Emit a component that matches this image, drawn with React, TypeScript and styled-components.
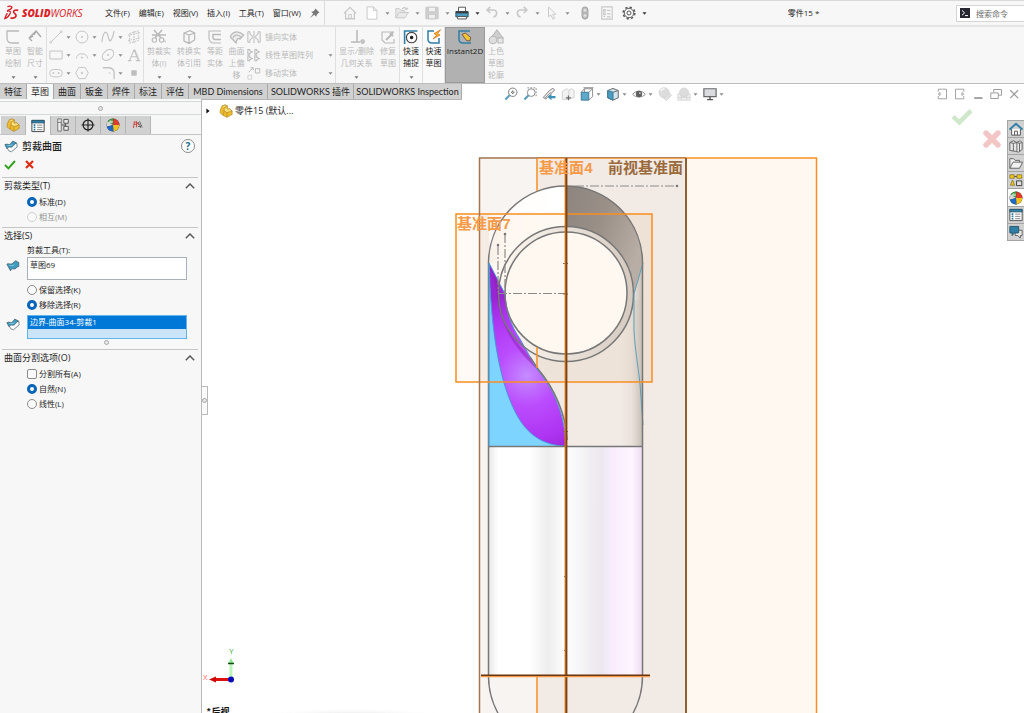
import React, { useState } from 'react';
import styled, { createGlobalStyle, css } from 'styled-components';

const sans = '"Open Sans", "Noto Sans CJK SC", sans-serif';

const GlobalStyle = createGlobalStyle`
  * { box-sizing: border-box; }
  html, body { margin: 0; padding: 0; }
  body { font-family: ${sans}; font-size: 8px; color: #1e1e1e; background: #fff; }
  button, input, textarea { font: inherit; color: inherit; margin: 0; }
  button { border: 0; padding: 0; background: none; }
  ul { list-style: none; margin: 0; padding: 0; }
  svg { display: block; flex: none; }
`;

const Shell = styled.div`
  display: flex;
  flex-direction: column;
  height: 100vh;
  overflow: hidden;
  background: #fff;
`;

/* ---------- title bar ---------- */

const TitleBar = styled.header`
  display: flex;
  align-items: center;
  height: 27px;
  flex: none;
  background: #f7f7f7;
  border-top: 1px solid #d9d9d9;
  border-bottom: 2px solid #e4e4e4;
`;

const Brand = styled.div`
  display: flex;
  align-items: center;
  gap: 3px;
  width: 105px;
  padding-left: 4px;
  color: #da2128;
  font-size: 10px;
  line-height: 12px;
  font-style: italic;
  white-space: nowrap;
  b { font-weight: 800; }
`;

const MenuBar = styled.nav`
  display: flex;
  width: 196px;
  justify-content: space-between;
`;

const MenuButton = styled.button`
  line-height: 14px;
  white-space: nowrap;
  font-size: 8px;
`;

const PinSlot = styled.div`
  display: flex;
  align-items: center;
  justify-content: center;
  width: 24px;
  height: 24px;
  padding-left: 3px;
  border-right: 1px solid #dcdcdc;
`;

const QuickBar = styled.div`
  display: flex;
  align-items: center;
  padding-left: 17px;
  gap: 3px;
`;

const QuickGroup = styled.div`
  display: flex;
  align-items: center;
`;

const QuickCell = styled.div<{ $split?: boolean; $off?: boolean }>`
  display: flex;
  align-items: center;
  width: ${p => (p.$split ? 30 : 22)}px;
  color: ${p => (p.$off ? '#c8c8c8' : '#555')};
`;

const IconButton = styled.button`
  display: flex;
  align-items: center;
  justify-content: center;
  width: 16px;
  height: 16px;
`;

const CaretButton = styled.button<{ $w?: number; $off?: boolean }>`
  display: flex;
  align-items: center;
  justify-content: center;
  width: ${p => p.$w ?? 14}px;
  height: 10px;
  color: ${p => (p.$off ? '#8c8c8c' : '#333')};
`;

const DocTitle = styled.div`
  flex: 1;
  text-align: center;
  line-height: 14px;
`;

const SearchBox = styled.label`
  display: flex;
  align-items: center;
  gap: 6px;
  width: 68px;
  height: 17px;
  padding-left: 3px;
  background: #fff;
  border: 1px solid #d5d5d5;
  border-right: 0;
`;

const SearchInput = styled.input`
  flex: 1;
  min-width: 0;
  border: 0;
  padding: 0;
  outline: 0;
  background: none;
  &::placeholder { color: #6a6a6a; opacity: 1; }
`;

/* ---------- ribbon ---------- */

const Ribbon = styled.div`
  display: flex;
  flex: none;
  height: 57px;
  background: #f7f7f7;
  border-bottom: 1px solid #bdbdbd;
`;

const RibbonGroup = styled.div<{ $w: number }>`
  display: flex;
  width: ${p => p.$w}px;
  flex: none;
  border-right: 1px solid #dfdfdf;
`;

const BigTool = styled.button<{ $w: number; $tone?: 'off' | 'on' | 'pressed' }>`
  display: flex;
  flex-direction: column;
  align-items: center;
  width: ${p => p.$w}px;
  height: 56px;
  padding-top: 2px;
  line-height: 12px;
  text-align: center;
  color: ${p => (p.$tone === 'on' || p.$tone === 'pressed' ? '#1e1e1e' : '#b9b9b9')};
  background: ${p => (p.$tone === 'pressed' ? '#b1b1b1' : p.$tone === 'on' ? '#fafafa' : 'transparent')};
  ${p => p.$tone === 'pressed' && css`border: 1px solid #9a9a9a; padding-top: 1px;`}
`;

const ToolText = styled.span`
  display: block;
  white-space: pre;
`;

const ToolCaret = styled.span`
  display: flex;
  flex: 1;
  align-items: flex-end;
  padding-bottom: 4px;
  color: #777;
`;

const ShapeGrid = styled.div`
  display: grid;
  grid-template-columns: 26px 26px 26px 18px;
  grid-template-rows: repeat(3, 18px);
  padding-top: 1px;
  color: #c4c4c4;
`;

const ShapeCell = styled.div`
  display: flex;
  align-items: center;
  padding-left: 1px;
`;

const PatternList = styled.div`
  display: flex;
  flex-direction: column;
  flex: 1;
  padding-top: 1px;
`;

const PatternRow = styled.div`
  display: flex;
  align-items: center;
  height: 18px;
  color: #b9b9b9;
`;

const PatternButton = styled.button`
  display: flex;
  align-items: center;
  gap: 4px;
  flex: 1;
  white-space: nowrap;
  line-height: 12px;
`;

/* ---------- tab row ---------- */

const TabRow = styled.div`
  display: flex;
  align-items: flex-start;
  flex: none;
  height: 15px;
`;

const CommandTabs = styled.div`
  display: flex;
  border-bottom: 1px solid #b5b5b5;
`;

const CommandTab = styled.button<{ $w: number; $active?: boolean }>`
  width: ${p => p.$w}px;
  height: 15px;
  line-height: 15px;
  font-family: Lato, "Noto Sans CJK SC", sans-serif;
  font-size: 9px;
  white-space: nowrap;
  background: ${p => (p.$active ? '#f7f7f7' : '#d1d1d1')};
  border-right: 1px solid #a9a9a9;
`;

const HeadsUp = styled.div`
  display: flex;
  align-items: center;
  height: 20px;
  margin-left: 41px;
  gap: 3px;
  flex: 1;
`;

const HeadsUpCell = styled.div`
  display: flex;
  align-items: center;
`;

const WindowButtons = styled.div`
  display: flex;
  align-items: center;
  height: 20px;
  gap: 2px;
  padding-right: 2px;
  color: #9b9b9b;
`;

/* ---------- property panel ---------- */

const Body = styled.main`
  display: flex;
  flex: 1;
  min-height: 0;
`;

const Panel = styled.aside`
  width: 202px;
  flex: none;
  background: #f7f7f7;
  border-right: 1px solid #b9b9b9;
  padding-top: 2px;
`;

const PanelGrip = styled.div`
  display: flex;
  align-items: center;
  justify-content: center;
  height: 14px;
  border-top: 1px solid #d3dad9;
  border-bottom: 1px solid #d3dad9;
`;

const Dot = styled.span`
  width: 5px;
  height: 5px;
  border-radius: 50%;
  border: 1px solid #a8a8a8;
  background: #e6e6e6;
`;

const ManagerTabs = styled.div`
  display: flex;
  height: 19px;
  margin-top: 1px;
  border-bottom: 1px solid #c4c4c4;
  padding-left: 1px;
`;

const ManagerTab = styled.button<{ $active?: boolean }>`
  display: flex;
  align-items: center;
  justify-content: center;
  width: 25px;
  height: ${p => (p.$active ? 19 : 18)}px;
  background: ${p => (p.$active ? '#f7f7f7' : '#d1d1d1')};
  border-right: 1px solid #b5b5b5;
`;

const FeatureTitle = styled.div`
  display: flex;
  align-items: center;
  height: 21px;
  padding: 0 6px 0 4px;
  gap: 4px;
`;

const FeatureName = styled.h1`
  flex: 1;
  margin: 0;
  font-size: 10px;
  line-height: 14px;
  font-weight: 500;
`;

const HelpButton = styled.button`
  width: 14px;
  height: 14px;
  border: 1px solid #8b8b8b;
  border-radius: 50%;
  background: #fff;
  color: #1c6a8e;
  font-size: 10px;
  line-height: 12px;
  font-weight: 700;
`;

const Decision = styled.div`
  display: flex;
  align-items: center;
  height: 21px;
  padding: 0 2px 4px;
  gap: 3px;
`;

const Section = styled.section<{ $pad: number }>`
  margin: 0 3px 0 2px;
  padding: 0 0 ${p => p.$pad}px 2px;
  border-top: 1px solid #c6c6c6;
`;

const SectionHead = styled.button`
  display: flex;
  align-items: center;
  justify-content: space-between;
  width: 100%;
  height: 16px;
  padding-right: 3px;
  font-size: 9px;
  line-height: 16px;
`;

const Choice = styled.label<{ $off?: boolean }>`
  display: flex;
  align-items: center;
  gap: 2px;
  height: 15px;
  margin-left: 23px;
  line-height: 15px;
  color: ${p => (p.$off ? '#8f8f8f' : '#1e1e1e')};
`;

const RadioInput = styled.input.attrs({ type: 'radio' })`
  appearance: none;
  width: 10px;
  height: 10px;
  border: 1px solid #8a8a8a;
  border-radius: 50%;
  background: #fafafa;
  &:checked { border: 3px solid #0a64b8; background: #fff; }
  &:disabled { border-color: #cfcfcf; }
`;

const CheckInput = styled.input.attrs({ type: 'checkbox' })`
  appearance: none;
  width: 10px;
  height: 10px;
  border: 1px solid #8a8a8a;
  border-radius: 2px;
  background: #fafafa;
  &:checked { background: #0a64b8; }
`;

const FieldLabel = styled.label`
  display: block;
  height: 13px;
  margin-left: 23px;
  line-height: 12px;
`;

const FieldRow = styled.div<{ $before?: number; $after?: number }>`
  display: flex;
  gap: 7px;
  padding-left: 2px;
  margin-top: ${p => p.$before ?? 0}px;
  margin-bottom: ${p => p.$after ?? 0}px;
  svg { margin-top: 2px; }
`;

const PickedText = styled.textarea`
  width: 160px;
  height: 23px;
  padding: 0 2px;
  line-height: 14px;
  border: 1px solid #aab0ba;
  border-radius: 0;
  background: #fff;
  resize: none;
  outline: 0;
  overflow: hidden;
`;

const PickedList = styled.ul`
  width: 160px;
  height: 24px;
  border: 1px solid #62b5ea;
  outline: 0;
  background: #cce4f7;
`;

const PickedItem = styled.li`
  height: 13px;
  padding-left: 2px;
  line-height: 12px;
  color: #fff;
  background: #0078d7;
`;

const GripLine = styled.div`
  display: flex;
  justify-content: center;
  align-items: center;
  height: 6px;
  padding-left: 11px;
`;

/* ---------- graphics area ---------- */

const Viewport = styled.section`
  position: relative;
  flex: 1;
  min-width: 0;
  overflow: hidden;
`;

const Scene = styled.svg`
  position: absolute;
  inset: 0;
  width: 100%;
  height: 100%;
`;

const TreeNode = styled.div`
  position: relative;
  display: inline-flex;
  align-items: center;
  height: 16px;
  margin-top: 4px;
  padding-left: 4px;
  gap: 9px;
  font-size: 9px;
  line-height: 16px;
`;

const TreeLabel = styled.span`
  display: flex;
  align-items: center;
  gap: 2px;
`;

const PanelHandle = styled.button`
  position: absolute;
  left: 0;
  top: 287px;
  display: flex;
  align-items: center;
  justify-content: center;
  width: 6px;
  height: 29px;
  background: #fafafa;
  border: 1px solid #b9b9b9;
  border-left: 0;
`;

const Confirm = styled.div`
  position: absolute;
  top: 8px;
  right: 22px;
  display: flex;
  gap: 9px;
  align-items: flex-start;
  button + button { margin-top: 22px; }
`;

const TaskPane = styled.div`
  position: absolute;
  top: 21px;
  right: 0;
  width: 17px;
  border-left: 1px solid #a5a5a5;
  border-top: 1px solid #a5a5a5;
`;

const TaskButton = styled.button<{ $active?: boolean }>`
  display: flex;
  align-items: center;
  padding-left: 1px;
  width: 16px;
  height: ${p => (p.$active ? 18 : 17)}px;
  background: ${p => (p.$active ? '#fff' : '#d1d1d1')};
  border-bottom: 1px solid #a5a5a5;
  overflow: hidden;
`;

/* ---------- glyphs ---------- */

const Caret = () => (
  <svg width="5" height="3" viewBox="0 0 5 3"><path d="M0.5 0.3h4L2.5 2.8z" fill="currentColor" /></svg>
);

type GlyphProps = { s?: number; v?: number; children: React.ReactNode };
const Glyph = ({ s = 14, v = 16, children }: GlyphProps) => (
  <svg width={s} height={s} viewBox={`0 0 ${v} ${v}`} fill="none" stroke="currentColor" strokeWidth="1.1">{children}</svg>
);

const Logo = () => (
  <svg width="15" height="16" viewBox="0 0 15 16" fill="none" stroke="#da2128" strokeWidth="1.3">
    <path d="M3.4 1.6C6 .8 8.400 1.200 7.800 2.800C7.400 4 5.200 5 3.200 5.600" />
    <path d="M3 6.400C5.600 5.200 7 6.400 6 8.800C5 11.200 2.800 13 .8 13.600C1.200 11.600 2 9.800 3.400 8.200" />
    <path d="M14.200 5.400C12 4.600 9.400 5.400 9.600 7C9.800 8.600 12.600 9.200 12 11C11.400 12.800 8.600 13.400 6.400 13" strokeWidth="1.700" />
  </svg>
);

const Ball = ({ s = 13 }: { s?: number }) => (
  <svg width={s} height={s} viewBox="0 0 16 16">
    <circle cx="8" cy="8" r="7.4" fill="#2a2a2a" />
    <path d="M8 8L2 3.6A7.2 7.2 0 0 1 8.6 0.8z" fill="#3a9e3e" />
    <path d="M8 8L8.6 0.8A7.2 7.2 0 0 1 15.2 8z" fill="#e23b2c" />
    <path d="M8 8L2 3.6A7.2 7.2 0 0 0 1 10z" fill="#d8d8d8" />
    <path d="M8 8L15.2 8A7.2 7.2 0 0 1 8.4 15.2z" fill="#f2c31c" />
    <path d="M8 8L1 10A7.2 7.2 0 0 0 8.4 15.2z" fill="#2168c4" />
    <ellipse cx="5.6" cy="4.4" rx="2.4" ry="1.6" fill="#fff" opacity=".6" />
  </svg>
);

const PartIcon = ({ s = 14 }: { s?: number }) => (
  <svg width={s} height={s} viewBox="0 0 16 16" stroke="#a9841f" strokeWidth=".7" strokeLinejoin="round">
    <path d="M1.400 7L3.400 2.400L7 1L9.600 2.200V6L12 5.400L15 8V12L9 15.200L4.800 13L1.400 10.400z" fill="#eebb2e" />
    <path d="M3.400 2.400L7 1L9.600 2.200L6.200 4L5.800 8L9 9.800L15 8L12 5.400L9.600 6" fill="#fbdf7c" />
    <path d="M9 9.800V15.200M5.800 8L4.800 13" fill="none" />
  </svg>
);

const SurfaceIcon = ({ trimmed }: { trimmed?: boolean }) => (
  <svg width="14" height="14" viewBox="0 0 16 16" stroke="#3f5a66" strokeWidth=".8" strokeLinejoin="round">
    {trimmed && <path d="M3 9L8 7L14.6 4.6L15 9L8.6 14.6L5.6 13.6z" fill="#fff" />}
    <path
      d={trimmed ? 'M1 6.6C3.4 4.4 5.6 8 7.6 5.4L10 2.4L14 4.4C11.6 6 10.4 9.6 8 9.4C5.8 9.4 5.4 8.6 3.4 11z' : 'M1 6C3.4 4 5.6 7.4 8 4.6L11 2L14.6 4V8.6C12 8.6 11 12.4 8.6 11.4C6.8 10.8 6.4 11 5.2 13.6z'}
      fill="#3f9cc0"
    />
    <path d="M4 7.4C6 7 7.6 8.6 9.6 6.4" stroke="#a7d8ea" fill="none" />
  </svg>
);

const Chevron = () => (
  <svg width="10" height="6" viewBox="0 0 10 6" fill="none" stroke="#5a5a5a" strokeWidth="1.5"><path d="M0.8 5.2L5 1L9.2 5.2" /></svg>
);

const shapes: { name: string; art: React.ReactNode; caret?: boolean }[] = [
  { name: '直线', caret: true, art: <><path d="M2 14L14 2" /><path d="M1 13h2v2h-2zM13 1h2v2h-2z" strokeWidth=".7" /></> },
  { name: '圆', caret: true, art: <><circle cx="8" cy="8" r="6.8" /><circle cx="8" cy="8" r=".8" /></> },
  { name: '样条曲线', caret: true, art: <path d="M1 14C2 4 5 0 7 4C9 8 9 14 11 12C13 10 14 6 15 1" strokeWidth="1.4" /> },
  { name: '基准面', art: <path d="M3 4L13 1V12L3 15zM1 6L15 3M1 12L15 9M8 1V16" strokeDasharray="2 1" /> },
  { name: '矩形', caret: true, art: <path d="M1 3.5H15V12.5H1z" /> },
  { name: '圆弧', caret: true, art: <><path d="M1.5 12A6.6 6.6 0 0 1 14.5 12" /><circle cx="8" cy="11" r=".8" /></> },
  { name: '椭圆', caret: true, art: <><ellipse cx="8" cy="8" rx="7.4" ry="5.2" transform="rotate(-40 8 8)" /><circle cx="8" cy="8" r=".8" /></> },
  { name: '文本', art: <path d="M1 14.4H5M10 14.4H15M3 14L8 2L13 14M5 10H11M9 2L13.6 14" strokeWidth="1.2" /> },
  { name: '槽口', caret: true, art: <><rect x=".8" y="4" width="14.4" height="8.4" rx="4.2" /><path d="M4 8.2H6M10 8.2H12" strokeWidth="2" /></> },
  { name: '多边形', art: <><path d="M4.4 1.6H11.6L15.2 8L11.6 14.4H4.4L.8 8z" /><circle cx="8" cy="8" r="1" /></> },
  { name: '圆角', caret: true, art: <><path d="M2 2H8C13 2 15 5 15 8V15" strokeWidth="1.5" /><path d="M9 7L11 9" /></> },
  { name: '点', art: <path d="M5.4 5.4H10.6V10.6H5.4z" fill="#bdbdbd" /> },
];

const patterns: { name: string; caret?: boolean; art: React.ReactNode }[] = [
  { name: '镜向实体', art: <path d="M1 2V14H3.4V11L6 9.6V6.4L3.4 5V2zM15 2V14H12.6V11L10 9.6V6.4L12.6 5V2zM8 1V15" /> },
  { name: '线性草图阵列', caret: true, art: <path d="M1 1.6H3V3L6 4.4L3 6V7H1zM9 1.6H11V3L14 4.4L11 6V7H9zM1 9H3V10.4L6 12L3 13.4V14.6H1zM9 9H11V10.4L14 12L11 13.4V14.6H9z" strokeWidth="1.2" /> },
  { name: '移动实体', caret: true, art: <><path d="M9.6 3H14.6V8H9.6zM2 7L7 2M4 2H7V5" /><path d="M1 10.6H5.4V15H1z" strokeWidth=".6" /></> },
];

const Headlamp = {
  fit: <><circle cx="10" cy="6" r="4.800" stroke="#777" fill="#fff" /><path d="M6.400 9.400L1.600 14.200" stroke="#5a9cbb" strokeWidth="2.400" /><path d="M8 6H12M10 4V8" stroke="#555" strokeWidth="1.300" strokeDasharray="1.400 1.200" /></>,
  area: <><circle cx="9.4" cy="6.4" r="4.400" stroke="#888" fill="#fff" /><path d="M6.4 9.4L1.6 14.2" stroke="#5a9cbb" strokeWidth="2.4" /><path d="M5 1H15V11" stroke="#888" strokeDasharray="2 1.5" /></>,
  previous: <><path d="M1.400 12L8.600 4L12.400 1.400L14.400 3.400L10 8L4.400 13.600z" stroke="#808080" fill="#ececec" /><path d="M3 13L10 6" stroke="#9a9a9a" /><path d="M15.400 12.800H10.800V15L6.400 11.400L10.800 8V10.200H15.400z" fill="#3c8fb5" stroke="none" /></>,
  section: <><path d="M1.400 5L7 2L9 4V14H1.400zM9 4L12 2L15 4V12L9 14" stroke="#d0d0d0" fill="#f2f2f2" /><path d="M5.600 12.400H11.400M8.500 9.600V15.200" stroke="#6b6b6b" strokeWidth="1.300" /></>,
  orient: <><path d="M1.4 6H10V15H1.4z" fill="#5ea9ca" stroke="#3b7894" /><path d="M1.4 6L5 2H14.4V11L10 15M10 6L14.4 2M5 2V6M4 .8H15.4" stroke="#777" strokeWidth=".9" /></>,
  display: <><path d="M2 4L8 1.6L14 4V12.4L8 15L2 12.4z" fill="#cfe4ed" stroke="#666" /><path d="M2 4L8 6V15L2 12.4z" fill="#4a9cc0" stroke="#3b7894" /><path d="M8 6L14 4" stroke="#666" /></>,
  hide: <><path d="M.8 8.4C4 3.6 12 3.6 15.2 8.4C12 12.4 4 12.4 .8 8.4z" stroke="#8a8a8a" fill="#fff" /><circle cx="8" cy="8" r="3.6" fill="#5e5e5e" stroke="none" /><circle cx="9" cy="7" r="1" fill="#ccc" stroke="none" /></>,
  look: <><path d="M5 11L11 5L15.4 9.6L9.4 15.6z" fill="#e6e6e6" stroke="#d0d0d0" /><circle cx="7" cy="6.6" r="5.8" fill="#dcdcdc" stroke="#d6d6d6" /><path d="M3 4.6C4 2.6 6 2 7.4 2" stroke="#f8f8f8" strokeWidth="1.6" /></>,
  scene: <><path d="M1 8H15V15H1z" fill="#f0f0f0" stroke="#d6d6d6" /><circle cx="8" cy="6.4" r="5.2" fill="#dcdcdc" stroke="#d6d6d6" /><path d="M1 12H15M5 9V15M11 9V15" stroke="#d6d6d6" /></>,
  screen: <><path d="M1 2H15V11H1z" fill="#d9dcdf" stroke="#6a6a6a" strokeWidth="1.4" /><path d="M8 11V14M4.6 14.4H11.4" stroke="#555" strokeWidth="1.6" /></>,
};

const headsUp: { key: keyof typeof Headlamp; label: string; caret?: boolean }[] = [
  { key: 'fit', label: '整屏显示全图' },
  { key: 'area', label: '局部放大' },
  { key: 'previous', label: '上一视图' },
  { key: 'section', label: '剖面视图' },
  { key: 'orient', label: '视图定向', caret: true },
  { key: 'display', label: '显示样式', caret: true },
  { key: 'hide', label: '隐藏/显示', caret: true },
  { key: 'look', label: '编辑外观' },
  { key: 'scene', label: '应用布景', caret: true },
  { key: 'screen', label: '视图设定', caret: true },
];

const quick: { label: string; off?: boolean; split?: boolean; art: React.ReactNode }[] = [
  { label: '主页', off: true, art: <><path d="M1 8.4L8 1.6L15 8.4M3 7.4V14.6H13V7.4" strokeWidth="1.5" /><path d="M6.6 14V9.6H9.6V14" /></> },
  { label: '新建', off: true, split: true, art: <path d="M2.4 1H9.6L13.6 5V15H2.4zM9.6 1V5H13.6" fill="#fff" /> },
  { label: '打开', off: true, split: true, art: <><path d="M1 13.6V3H5L6.6 5H11V7.4M1 13.6L4.6 7.4H15.4L11.4 13.6z" fill="#e9e9e9" /><path d="M8 3.4C10 1 12.6 1.4 13.4 4M13.4 4L11.6 3.4M13.4 4L14.8 2" strokeWidth="1.4" /></> },
  { label: '保存', off: true, split: true, art: <><path d="M1 1.4H15V14.6H1z" fill="#cfcfcf" /><path d="M4 1.4H12V6.6H4z" fill="#f2f2f2" /><path d="M4 9.4H12V14.6H4z" fill="#ededed" /></> },
];

const Edge = { stroke: '#777', strokeWidth: 1.5, fill: 'none' };

/* The end-mill style part, with its reference planes and trimmed surface. */
const ModelScene = () => (
  <Scene viewBox="202 99 822 614" preserveAspectRatio="xMidYMin slice" fontFamily='"Liberation Mono", "Noto Sans CJK SC", monospace'>
    <defs>
      <linearGradient id="barrel" x1="0" x2="1" y1="0" y2="0">
        <stop offset="0" stopColor="#e9e9e9" /><stop offset=".06" stopColor="#fff" /><stop offset=".26" stopColor="#fff" />
        <stop offset=".38" stopColor="#eeeeee" /><stop offset=".42" stopColor="#f2f2f2" /><stop offset=".48" stopColor="#fdfdfd" />
        <stop offset=".54" stopColor="#fafafa" /><stop offset=".73" stopColor="#ebe7ee" /><stop offset=".8" stopColor="#f9edfd" />
        <stop offset=".93" stopColor="#fdf5ff" /><stop offset="1" stopColor="#eed9f0" />
      </linearGradient>
      <linearGradient id="hood" x1="0" x2="1" y1="0" y2=".5">
        <stop offset="0" stopColor="#8c847e" /><stop offset=".5" stopColor="#9a9088" /><stop offset="1" stopColor="#b8aea5" />
      </linearGradient>
      <linearGradient id="flank" x1="0" x2="1" y1="0" y2="0">
        <stop offset="0" stopColor="#cfc6bd" stopOpacity="0" /><stop offset=".5" stopColor="#cfc6bd" stopOpacity=".25" /><stop offset="1" stopColor="#c3bab2" />
      </linearGradient>
      <linearGradient id="band" x1="0" x2="1" y1="0" y2="0">
        <stop offset="0" stopColor="#fff8f1" /><stop offset=".45" stopColor="#ece5dd" /><stop offset="1" stopColor="#d6cac0" />
      </linearGradient>
      <linearGradient id="sky" x1="0" x2="0" y1="0" y2="1">
        <stop offset="0" stopColor="#74bfe6" /><stop offset=".5" stopColor="#7cd4ff" /><stop offset="1" stopColor="#7cd4ff" />
      </linearGradient>
      <linearGradient id="dome" x1="0" x2="1" y1="0" y2="0">
        <stop offset="0" stopColor="#e8e4df" /><stop offset=".25" stopColor="#fffdfb" /><stop offset="1" stopColor="#fff" />
      </linearGradient>
      <radialGradient id="violet" gradientUnits="userSpaceOnUse" cx="527" cy="376" r="84">
        <stop offset="0" stopColor="#c48cff" /><stop offset=".35" stopColor="#bb4dfd" /><stop offset=".75" stopColor="#ae34f2" /><stop offset="1" stopColor="#9a25d4" />
      </radialGradient>
      <radialGradient id="floor" gradientUnits="userSpaceOnUse" cx="352" cy="0" r="100" gradientTransform="matrix(1 0 0 .08 0 716)">
        <stop offset="0" stopColor="#d8d8d8" /><stop offset="1" stopColor="#fff" stopOpacity="0" />
      </radialGradient>
    </defs>

    <rect x="250" y="700" width="204" height="20" fill="url(#floor)" />

    {/* reference planes */}
    <rect x="686" y="158" width="130" height="700" fill="#fff8f1" />
    <rect x="479" y="158" width="58" height="700" fill="#f8f4f1" />
    <rect x="537" y="158" width="149" height="700" fill="#f2eae5" />
    <rect x="456" y="214" width="196" height="168" fill="#fff8f1" fillOpacity=".75" />
    <rect x="479" y="214" width="10" height="168" fill="#f5ece4" />
    <rect x="643" y="214" width="9" height="168" fill="#eee2d7" />
    <path d="M600 214H652V268H643C643 246 626 222 600 214z" fill="#eee2d7" />

    {/* body */}
    <path d="M489 263A77 77 0 0 1 566 186V300H489z" fill="url(#dome)" />
    <path d="M507 214H566V300H489V263C489 244 495 228 507 214z" fill="#fff6ec" fillOpacity=".65" />
    <path d="M489 263H566V446H489z" fill="#f3ede6" />
    <path d="M489 263H540V294H489z" fill="#fff8f1" />
    <path d="M566 300H643V446H566z" fill="#f2eae5" />
    <path d="M525 300H643V382H540z" fill="#ede3d9" />
    <path d="M540 382H566V446z" fill="#f2eae5" />
    <path d="M566 186A77 77 0 0 1 643 263L634 294H566z" fill="url(#hood)" />
    <path d="M620 300L634 294L643 263V446H620z" fill="url(#flank)" />

    {/* bore ring */}
    <circle cx="566" cy="294" r="67.5" fill="url(#band)" />
    <circle cx="566" cy="293" r="61" fill="#fff8f1" />

    {/* trimmed surface */}
    <path d="M489 263V446H566C520 446 492 380 489 263z" fill="url(#sky)" />
    <path d="M489 263L505 294C506 312 511 326 520 339L537 369C554 389 565 415 566 446C548 446 530 438 518 417C499 384 491 330 489 263z" fill="url(#violet)" />
    <path d="M489 263L498 281C498 318 512 340 526 352L537 369C518 352 500 330 496 290z" fill="#8a20b4" fillOpacity=".5" />
    <path d="M489 263L505 294C506 312 511 326 520 339L537 369C554 389 565 415 566 446C548 446 530 438 518 417C499 384 491 330 489 263" fill="none" stroke="#4a90e0" strokeWidth="1" />
    <path d="M530 357L538 369C555 389 566 415 567 440" {...Edge} />
    <path d="M498.500 294A67.500 67.500 0 1 1 633.500 294A67.500 67.500 0 0 1 498.500 294" {...Edge} />
    <path d="M505 293A61 61 0 1 1 627 293A61 61 0 0 1 505 293" {...Edge} />
    <path d="M643 263L634 294V330C635 350 638 365 640 384L643 425" fill="none" stroke="#5b9fb8" strokeWidth="1" />

    {/* barrel */}
    <rect x="489" y="447" width="154" height="228" fill="url(#barrel)" />
    <path d="M488.500 676V263A77 77 0 0 1 642.500 263V676A77 77 0 0 1 565.500 753A77 77 0 0 1 488.500 676" {...Edge} />
    <path d="M488 446.500H643" {...Edge} />
    <path d="M489 263V446" stroke="#4ba0e0" strokeWidth="1" />

    {/* sketch centre lines */}
    <path d="M575 186H676M498 293.500H566M505 234V292M498 246V292" fill="none" stroke="#8a8a8a" strokeWidth="1.2" strokeDasharray="9 2 2 2" />
    <g fill="#777"><circle cx="677" cy="186" r="1.300" /><circle cx="505" cy="234" r="1.300" /><circle cx="498" cy="245" r="1.300" /></g>
    <path d="M563 263.500H568M563 431.500H568M564 576.500H567M564 650.500H567M563 294H568" stroke="#7a6a5a" strokeWidth="1" />

    {/* plane outlines */}
    <g fill="none">
      <path d="M537 158H816.500V720M537 158V191M537 676V720M537 347V368" stroke="#f98e24" strokeWidth="1.500" />
      <path d="M456 214H652V382H456z" stroke="#fa8d20" strokeWidth="1.500" />
      <path d="M479.500 720V158H537" stroke="#a0764f" strokeWidth="1.500" />
      <path d="M537 157.500H686" stroke="#a0764f" strokeWidth=".8" />
      <path d="M686 158V720" stroke="#8f5f30" strokeWidth="2" />
      <path d="M565.500 158V720" stroke="#e07c20" strokeWidth="1.800" />
      <path d="M566.500 158V720" stroke="#7c4311" strokeWidth="1.800" />
      <path d="M481 676.500H650" stroke="#f29a48" strokeWidth="1.400" />
      <path d="M481 675.300H650" stroke="#6d3410" strokeWidth="1.500" />
    </g>
    <g fontSize="15" fontWeight="700">
      <text x="539" y="173" fill="#f79a48">基准面4</text>
      <text x="608" y="173" fill="#9a6a3c">前视基准面</text>
      <text x="457" y="229" fill="#f79a48">基准面7</text>
    </g>

    {/* view triad */}
    <path d="M231 679V664" stroke="#b8f5b8" strokeWidth="3" />
    <path d="M228 664H234L231 658z" fill="#8fe98f" /><path d="M228 663.500H234" stroke="#134d13" strokeWidth="1.500" />
    <path d="M229 679.500H214" stroke="#e01010" strokeWidth="3" /><path d="M209 679.500L216 676.500V682.500z" fill="#d00808" />
    <circle cx="231" cy="679.500" r="3" fill="#0a0ab8" />
    <g fontFamily='"Liberation Sans", sans-serif' fontSize="7">
      <text x="229" y="654" fill="#3cae3c">Y</text>
      <text x="203" y="680" fill="#ff6a6a">X</text>
    </g>
    <text x="206" y="715" fontSize="9" fontWeight="700" fill="#111">*后视</text>
  </Scene>
);

export default function App() {
  const [kind, setKind] = useState('standard');
  const [keep, setKeep] = useState('remove');
  const [split, setSplit] = useState('natural');
  const [all, setAll] = useState(false);

  return (
    <Shell>
      <GlobalStyle />
      <TitleBar>
        <Brand><Logo /><span><b>SOLID</b>WORKS</span></Brand>
        <MenuBar>
          {['文件(F)', '编辑(E)', '视图(V)', '插入(I)', '工具(T)', '窗口(W)'].map(m => <MenuButton key={m}>{m}</MenuButton>)}
        </MenuBar>
        <PinSlot>
          <svg width="11" height="11" viewBox="0 0 12 12" fill="#777"><path d="M7 .6L11.4 5L10 5.600L8.400 7.400L8 9.600L5.600 7.400L1 11.200L4.600 6.400L2.400 4.200L4.600 3.800L6.400 2z" /></svg>
        </PinSlot>
        <QuickBar>
          <QuickGroup>
            {quick.map(q => (
              <QuickCell key={q.label} $split={q.split} $off={q.off}>
                <IconButton aria-label={q.label}><Glyph>{q.art}</Glyph></IconButton>
                {q.split && <CaretButton $off aria-label={`${q.label}选项`}><Caret /></CaretButton>}
              </QuickCell>
            ))}
            <QuickCell $split>
              <IconButton aria-label="打印">
                <Glyph><path d="M4 6V1.400H12V6" fill="#fff" stroke="#555" /><path d="M1 6.400H15V12.400H1z" fill="#4b9cc0" stroke="#28566b" /><path d="M1 6H15V8.400H1z" fill="#3b3b3b" stroke="none" /><path d="M3 12H13V14.800H3z" fill="#fff" stroke="#555" /></Glyph>
              </IconButton>
              <CaretButton aria-label="打印选项"><Caret /></CaretButton>
            </QuickCell>
            <QuickCell $split $off>
              <IconButton aria-label="撤消"><Glyph><path d="M3 4.600H10C15 5 14 11.600 9.600 12.600M6 1L2.400 4.600L6 8" strokeWidth="1.800" /></Glyph></IconButton>
              <CaretButton $off aria-label="撤消选项"><Caret /></CaretButton>
            </QuickCell>
            <QuickCell $split $off>
              <IconButton aria-label="重做"><Glyph><path d="M13 4.600H6C1 5 2 11.600 6.400 12.600M10 1L13.600 4.600L10 8" strokeWidth="1.800" /></Glyph></IconButton>
              <CaretButton $off aria-label="重做选项"><Caret /></CaretButton>
            </QuickCell>
            <QuickCell $split $off>
              <IconButton aria-label="选择"><Glyph><path d="M4 1V12.400L6.600 10L9 15L11 14L8.800 9.400H12.400z" /></Glyph></IconButton>
              <CaretButton $off aria-label="选择选项"><Caret /></CaretButton>
            </QuickCell>
          </QuickGroup>
          <QuickGroup>
            <QuickCell $off><IconButton aria-label="重建模型"><Glyph><rect x="4.600" y="1" width="6.800" height="14" rx="3.400" fill="#b5b5b5" stroke="#a5a5a5" /><circle cx="8" cy="4.800" r="1.800" fill="#e6e6e6" /><circle cx="8" cy="11" r="1.800" fill="#e6e6e6" /></Glyph></IconButton></QuickCell>
            <QuickCell $off><IconButton aria-label="文件属性"><Glyph><path d="M2 1H14V15H2zM4 4H6V6H4zM4 8H6V10H4zM4 12H6M8 5H12M8 9H12M8 12.400H12" strokeWidth="1.300" /></Glyph></IconButton></QuickCell>
            <QuickCell $split>
              <IconButton aria-label="选项">
                <Glyph><circle cx="8" cy="8" r="2.300" /><circle cx="8" cy="8" r="5.400" /><circle cx="8" cy="8" r="6.700" strokeWidth="1.700" strokeDasharray="2.600 2.660" /></Glyph>
              </IconButton>
              <CaretButton aria-label="选项菜单"><Caret /></CaretButton>
            </QuickCell>
          </QuickGroup>
        </QuickBar>
        <DocTitle>零件15 *</DocTitle>
        <SearchBox>
          <svg width="10" height="10" viewBox="0 0 10 10"><rect width="10" height="10" fill="#262630" /><path d="M2 2.400L4.600 4.800L2 7.200M5 7.600H8" stroke="#fff" fill="none" /></svg>
          <SearchInput placeholder="搜索命令" aria-label="搜索命令" />
        </SearchBox>
      </TitleBar>

      <Ribbon>
        <RibbonGroup $w={47}>
          <BigTool $w={26}>
            <Glyph s={16}><path d="M14 2H2V9C2 12 4 14 7 14H14" strokeWidth="1.300" /></Glyph>
            <ToolText>{'草图\n绘制'}</ToolText><ToolCaret><Caret /></ToolCaret>
          </BigTool>
          <BigTool $w={18}>
            <Glyph s={16}><path d="M2 9L9 2L14 8M2 9L5 12M9 2L7 6M2 9L6 7" strokeWidth="1.400" stroke="#a9a9a9" /></Glyph>
            <ToolText>{'智能\n尺寸'}</ToolText><ToolCaret><Caret /></ToolCaret>
          </BigTool>
        </RibbonGroup>
        <RibbonGroup $w={97}>
          <ShapeGrid>
            {shapes.map(s => (
              <ShapeCell key={s.name}>
                <IconButton aria-label={s.name}><Glyph>{s.art}</Glyph></IconButton>
                {s.caret && <CaretButton $w={8} $off aria-label={`${s.name}选项`}><Caret /></CaretButton>}
              </ShapeCell>
            ))}
          </ShapeGrid>
        </RibbonGroup>
        <RibbonGroup $w={192}>
          <BigTool $w={30}>
            <Glyph s={16}><path d="M3 1L10 9M11 1L4 9M1 6H15" strokeWidth="1.500" /><circle cx="3.400" cy="11" r="2.200" /><circle cx="10.600" cy="11" r="2.200" /><path d="M12 9L15 14" strokeDasharray="2 1" /></Glyph>
            <ToolText>{'剪裁实\n体(I)'}</ToolText><ToolCaret><Caret /></ToolCaret>
          </BigTool>
          <BigTool $w={30}>
            <Glyph s={16}><path d="M3 4L9 1.600L13.600 4V11L8 14.400L3 12zM3 4L8 6L13.600 4M8 6V14.400" strokeWidth="1.300" /></Glyph>
            <ToolText>{'转换实\n体引用'}</ToolText><ToolCaret><Caret /></ToolCaret>
          </BigTool>
          <BigTool $w={22}>
            <Glyph s={16}><path d="M14 2H2V9C2 12 4 14 7 14H14" /><path d="M14 5.600H6V8C6 9.600 7 10.600 8.600 10.600H14" strokeWidth="1.500" /></Glyph>
            <ToolText>{'等距\n实体'}</ToolText>
          </BigTool>
          <BigTool $w={21}>
            <Glyph s={16}><path d="M1.400 8C3 3 8 .6 14.600 6L11 10C9.600 8.600 8 9.400 7 14z" strokeWidth="1.300" fill="#ececec" /><path d="M4 9C5 6 8 4.600 12 8" /></Glyph>
            <ToolText>{'曲面\n上偏\n移'}</ToolText>
          </BigTool>
          <PatternList>
            {patterns.map(p => (
              <PatternRow key={p.name}>
                <PatternButton><Glyph s={14}>{p.art}</Glyph>{p.name}</PatternButton>
                {p.caret && <CaretButton $w={9} $off aria-label={`${p.name}选项`}><Caret /></CaretButton>}
              </PatternRow>
            ))}
          </PatternList>
        </RibbonGroup>
        <RibbonGroup $w={64}>
          <BigTool $w={41}>
            <Glyph s={16}><path d="M8 1V13M2 13H11" strokeWidth="1.500" /><circle cx="13.600" cy="12.600" r="1.800" fill="#cacaca" /></Glyph>
            <ToolText>{'显示/删除\n几何关系'}</ToolText><ToolCaret><Caret /></ToolCaret>
          </BigTool>
          <BigTool $w={22}>
            <Glyph s={16}><path d="M14 3H2V11L5 14H14V10" /><path d="M6 11L11 6M10 4L13 7M13 3L10.600 6.400" strokeWidth="2" /></Glyph>
            <ToolText>{'修复\n草图'}</ToolText>
          </BigTool>
        </RibbonGroup>
        <RibbonGroup $w={23}>
          <BigTool $w={22} $tone="on">
            <Glyph s={16}><path d="M1.600 15V2H14.400" stroke="#2f7fa6" strokeWidth="1.600" /><circle cx="8.600" cy="8.600" r="5.200" stroke="#444" /><circle cx="8.600" cy="8.600" r="1.200" fill="#222" /></Glyph>
            <ToolText>{'快速\n捕捉'}</ToolText><ToolCaret><Caret /></ToolCaret>
          </BigTool>
        </RibbonGroup>
        <RibbonGroup $w={22}>
          <BigTool $w={21} $tone="on">
            <Glyph s={16}><path d="M8 2H2V10C2 12.400 3.600 14 6 14H13V9" stroke="#2f7fa6" strokeWidth="1.500" /><path d="M14.600 .8L8 4.600L10.600 6L7 10L14 6L11.600 4.600z" fill="#f6b71c" stroke="#d2691e" strokeWidth=".7" /></Glyph>
            <ToolText>{'快速\n草图'}</ToolText>
          </BigTool>
        </RibbonGroup>
        <BigTool $w={40} $tone="pressed">
          <Glyph s={16}><path d="M13 2H2V10C2 12.400 3.600 14 6 14H14" stroke="#2f7fa6" strokeWidth="1.500" /><path d="M5 5.400L8.400 4L13.600 8.400L13 12L9.600 11.600z" fill="#f4c430" stroke="#544" strokeWidth=".8" /></Glyph>
          <ToolText>Instant2D</ToolText>
        </BigTool>
        <BigTool $w={22}>
          <Glyph s={16}><path d="M9 1L15 9H3z" fill="#cfcfcf" /><circle cx="5" cy="11" r="3.800" fill="#dedede" /><path d="M10 9V14H15V9z" fill="#e8e8e8" /></Glyph>
          <ToolText>{'上色\n草图\n轮廓'}</ToolText>
        </BigTool>
      </Ribbon>

      <TabRow>
        <CommandTabs role="tablist">
          {['特征', '草图', '曲面', '钣金', '焊件', '标注', '评估'].map(t => (
            <CommandTab key={t} role="tab" $w={27} $active={t === '草图'}>{t}</CommandTab>
          ))}
          <CommandTab role="tab" $w={79}>MBD Dimensions</CommandTab>
          <CommandTab role="tab" $w={86}>SOLIDWORKS 插件</CommandTab>
          <CommandTab role="tab" $w={108}>SOLIDWORKS Inspection</CommandTab>
        </CommandTabs>
        <HeadsUp>
          {headsUp.map(h => (
            <HeadsUpCell key={h.key}>
              <IconButton aria-label={h.label}><Glyph>{Headlamp[h.key]}</Glyph></IconButton>
              {h.caret && <CaretButton $w={7} $off aria-label={`${h.label}选项`}><Caret /></CaretButton>}
            </HeadsUpCell>
          ))}
        </HeadsUp>
        <WindowButtons>
          <IconButton aria-label="左窗格"><Glyph s={12}><path d="M3 5V1.600H14V14.400H3V10.600M5.400 6L3 8L5.400 10z" strokeWidth="1.200" /></Glyph></IconButton>
          <IconButton aria-label="右窗格"><Glyph s={12}><path d="M13 5V1.600H2V14.400H13V10.600M10.600 6L13 8L10.600 10z" strokeWidth="1.200" /></Glyph></IconButton>
          <IconButton aria-label="最小化"><Glyph s={12}><path d="M3 13.400H14" strokeWidth="2.400" /></Glyph></IconButton>
          <IconButton aria-label="还原"><Glyph s={12}><path d="M1 6.600H11V14H1zM5 6V2H15.400V9.600H11.600" strokeWidth="1.300" /></Glyph></IconButton>
          <IconButton aria-label="关闭"><Glyph s={12}><path d="M3 3L13.400 13.400M13.400 3L3 13.400" strokeWidth="1.600" /></Glyph></IconButton>
        </WindowButtons>
      </TabRow>

      <Body>
        <Panel>
          <PanelGrip><Dot /></PanelGrip>
          <ManagerTabs role="tablist">
            <ManagerTab role="tab" aria-label="设计树"><PartIcon /></ManagerTab>
            <ManagerTab role="tab" aria-label="属性" $active>
              <Glyph><path d="M1 1.600H15V14.400H1z" fill="#fff" stroke="#444" /><path d="M1 1.600H15V4.400H1z" fill="#2f7fa6" stroke="#2b5a72" /><path d="M3 7H5M3 9.600H5M3 12.200H5" stroke="#2f7fa6" strokeWidth="1.800" /><path d="M7 7H13M7 9.600H13M7 12.200H13" stroke="#888" /></Glyph>
            </ManagerTab>
            <ManagerTab role="tab" aria-label="配置">
              <Glyph><path d="M2 1H6V15H2zM2 5H6" fill="#eee" stroke="#777" /><path d="M9 1.600H14V6H9zM9 9.600H14V14H9z" fill="#eee" stroke="#555" /><path d="M6 8H11V6M11 8V9.600" stroke="#555" /></Glyph>
            </ManagerTab>
            <ManagerTab role="tab" aria-label="尺寸">
              <Glyph><circle cx="8" cy="8" r="5.600" stroke="#222" strokeWidth="1.400" /><path d="M8 .6V15.400M.6 8H15.400" stroke="#222" strokeWidth="1.300" /></Glyph>
            </ManagerTab>
            <ManagerTab role="tab" aria-label="外观"><Ball s={14} /></ManagerTab>
            <ManagerTab role="tab" aria-label="分析">
              <Glyph s={12}><path d="M2 12L3 4H6M3 7H6M6 11V4L9 8" stroke="#d04a45" strokeWidth="1.400" /><path d="M8 4L12 12M10 3L13.600 11M8 10H12" stroke="#555" /></Glyph>
            </ManagerTab>
          </ManagerTabs>
          <FeatureTitle>
            <SurfaceIcon trimmed />
            <FeatureName>剪裁曲面</FeatureName>
            <HelpButton aria-label="帮助">?</HelpButton>
          </FeatureTitle>
          <Decision>
            <IconButton aria-label="确定"><svg width="12" height="10" viewBox="0 0 12 10" fill="none" stroke="#2f9e1e" strokeWidth="1.900"><path d="M1 5L4.400 8.400L11 1" /></svg></IconButton>
            <IconButton aria-label="取消"><svg width="9" height="9" viewBox="0 0 9 9" stroke="#dd2c12" strokeWidth="2.200"><path d="M1 1L8 8M8 1L1 8" /></svg></IconButton>
          </Decision>

          <Section $pad={3}>
            <SectionHead>剪裁类型(T)<Chevron /></SectionHead>
            <Choice><RadioInput name="kind" checked={kind === 'standard'} onChange={() => setKind('standard')} />标准(D)</Choice>
            <Choice $off><RadioInput name="kind" disabled checked={kind === 'mutual'} onChange={() => setKind('mutual')} />相互(M)</Choice>
          </Section>

          <Section $pad={4}>
            <SectionHead>选择(S)<Chevron /></SectionHead>
            <FieldLabel htmlFor="tool">剪裁工具(T):</FieldLabel>
            <FieldRow $after={2}>
              <SurfaceIcon />
              <PickedText id="tool" readOnly value="草图69" />
            </FieldRow>
            <Choice><RadioInput name="keep" checked={keep === 'keep'} onChange={() => setKeep('keep')} />保留选择(K)</Choice>
            <Choice><RadioInput name="keep" checked={keep === 'remove'} onChange={() => setKeep('remove')} />移除选择(R)</Choice>
            <FieldRow $before={3}>
              <SurfaceIcon trimmed />
              <PickedList role="listbox" aria-label="要移除的部分">
                <PickedItem role="option" aria-selected>边界-曲面34-剪裁1</PickedItem>
              </PickedList>
            </FieldRow>
            <GripLine><Dot /></GripLine>
          </Section>

          <Section $pad={0}>
            <SectionHead>曲面分割选项(O)<Chevron /></SectionHead>
            <Choice><CheckInput checked={all} onChange={e => setAll(e.target.checked)} />分割所有(A)</Choice>
            <Choice><RadioInput name="split" checked={split === 'natural'} onChange={() => setSplit('natural')} />自然(N)</Choice>
            <Choice><RadioInput name="split" checked={split === 'linear'} onChange={() => setSplit('linear')} />线性(L)</Choice>
          </Section>
        </Panel>

        <Viewport>
          <ModelScene />
          <TreeNode>
            <svg width="4" height="6" viewBox="0 0 4 6"><path d="M.4 .4L3.600 3L.4 5.600z" fill="#111" /></svg>
            <TreeLabel><PartIcon />零件15 (默认...</TreeLabel>
          </TreeNode>
          <PanelHandle aria-label="折叠面板"><Dot /></PanelHandle>
          <Confirm>
            <button aria-label="接受"><svg width="22" height="20" viewBox="0 0 22 20" fill="none" stroke="#cfe8cb" strokeWidth="4.500"><path d="M2 9.600L8.400 15.400L20 3.600" /></svg></button>
            <button aria-label="放弃"><svg width="20" height="20" viewBox="0 0 20 20" stroke="#f3c6c6" strokeWidth="5.400" strokeLinecap="round"><path d="M4 4L16 16M16 4L4 16" /></svg></button>
          </Confirm>
          <TaskPane>
            <TaskButton aria-label="资源"><Glyph><path d="M3 8V15H13V8" fill="#fff" stroke="#555" /><path d="M.6 8.600L8 2L15.400 8.600" stroke="#2f7fa6" strokeWidth="2" /><path d="M6.400 15V10.400H9.600V15" stroke="#555" /></Glyph></TaskButton>
            <TaskButton aria-label="设计库"><Glyph><path d="M1 4L5 2L9 4L13 2L15 4V12L11 15L7 14L1 13zM5 5V14M9 4V14M12 5V14M1 4L5 5L9 4L12 5L15 4" fill="#e8e8e8" stroke="#666" /></Glyph></TaskButton>
            <TaskButton aria-label="文件探索器"><Glyph><path d="M1 14V3H5L7 5H12V7M1 14L4.600 7H15.600L12 14z" fill="#f0f0f0" stroke="#666" /></Glyph></TaskButton>
            <TaskButton aria-label="视图调色板"><Glyph><path d="M1 2H6V6H1zM9 2H14.600V6H9zM1.600 14H6.400L4 8z" fill="#f2c81c" stroke="#7a6a20" strokeWidth=".8" /><path d="M8.600 9H14.600V14.400H8.600z" fill="#ddd" stroke="#444" /><path d="M6 4H9" stroke="#555" /></Glyph></TaskButton>
            <TaskButton aria-label="外观" $active><Ball s={14} /></TaskButton>
            <TaskButton aria-label="自定义属性"><Glyph><path d="M1 1.600H15V14.400H1z" fill="#fff" stroke="#555" /><path d="M1 1.600H15V4.400H1z" fill="#2f7fa6" stroke="#2b5a72" /><path d="M3 7H5M3 9.600H5M3 12.200H5" stroke="#2f7fa6" strokeWidth="1.800" /><path d="M7 7H13M7 9.600H13M7 12.200H13" stroke="#888" /></Glyph></TaskButton>
            <TaskButton aria-label="论坛"><Glyph><path d="M7 6H15V12H13V15L10 12H7z" fill="#e8e8e8" stroke="#666" /><path d="M1 1.600H11V9H6L3.600 12V9H1z" fill="#2f7fa6" stroke="#28566b" /></Glyph></TaskButton>
          </TaskPane>
        </Viewport>
      </Body>
    </Shell>
  );
}
